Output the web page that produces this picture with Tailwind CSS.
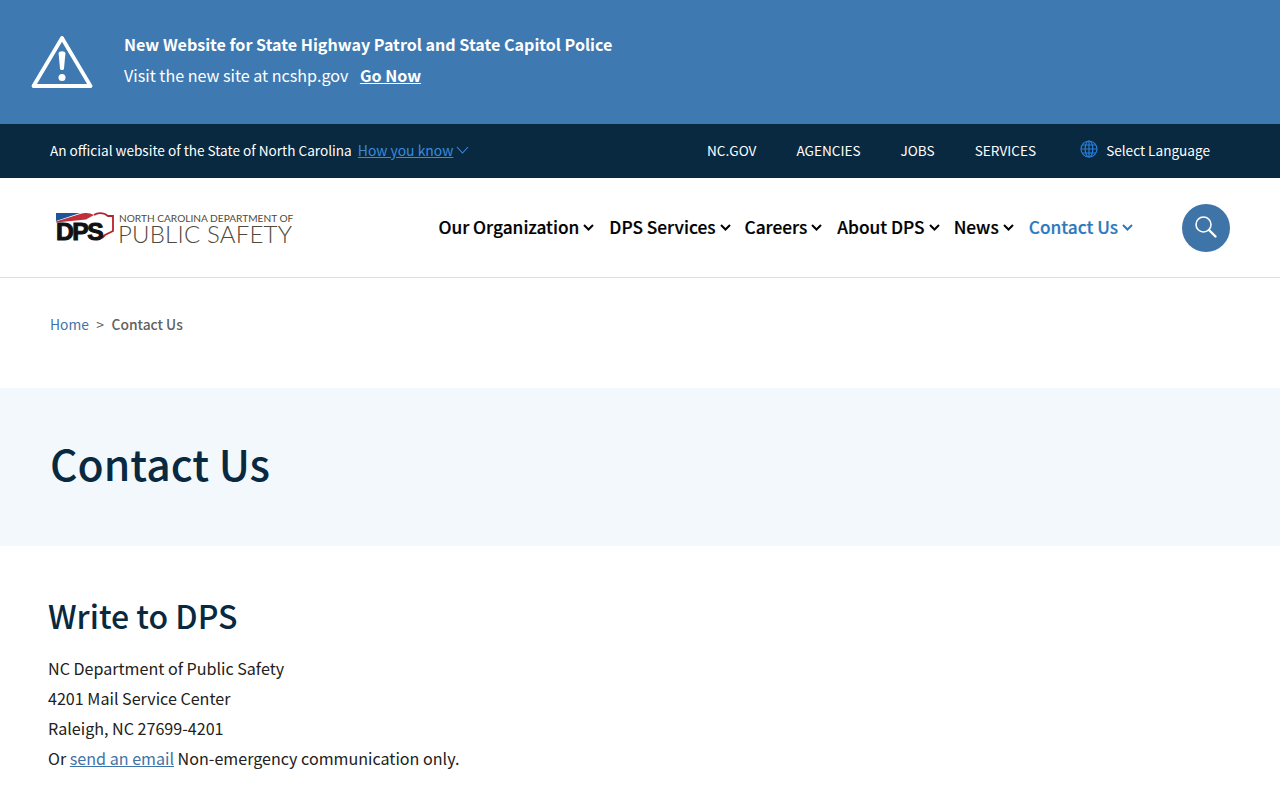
<!DOCTYPE html>
<html lang="en">

<head>
    <meta charset="UTF-8">
    <meta name="viewport" content="width=device-width, initial-scale=1.0">
    <title>Contact Us</title>
    <script src="https://cdn.jsdelivr.net/npm/@tailwindcss/browser@4"></script>
</head>

<body class="bg-white text-[#212121] font-['Noto_Sans_CJK_JP',sans-serif] overflow-hidden h-[800px]">
    <!-- alert banner -->
    <div class="bg-[#3e79b1] h-[124px] flex items-center pl-[31px] text-white">
        <svg class="w-[62px] h-[54px] mb-[1px]" viewBox="0 0 62 54" fill="none">
            <path d="M31 3 L59.5 51 L2.5 51 Z" stroke="white" stroke-width="3.8" stroke-linejoin="round" />
            <path d="M27.6 18.5 C27.6 15.5 34.4 15.5 34.4 18.5 L33 33.5 C32.8 35.6 29.2 35.6 29 33.5 Z" fill="white" />
            <circle cx="31" cy="42.5" r="3.5" fill="white" />
        </svg>
        <div class="ml-[31px] mb-[4px]">
            <p class="text-[16.1px] leading-[31px] font-bold">New Website for State Highway Patrol and State Capitol Police</p>
            <p class="text-[16.1px] leading-[31px]">Visit the new site at ncshp.gov <a href="#" class="ml-[8px] font-bold underline">Go Now</a></p>
        </div>
    </div>

    <!-- state bar -->
    <div class="bg-[#092940] h-[54px] flex items-center justify-between pl-[50px] pr-[70px] pb-[1px] text-white text-[13.6px]">
        <div class="flex items-center">
            <span>An official website of the State of North Carolina</span>
            <a href="#" class="ml-[6px] text-[13.9px] text-[#3b8bdb] underline">How you know </a>
            <svg class="w-[13px] h-[8px] ml-[3px]" viewBox="0 0 13 8" fill="none">
                <path d="M1 1 L6.5 7 L12 1" stroke="#3b8bdb" stroke-width="1.1" />
            </svg>
        </div>
        <div class="flex items-center">
            <a href="#" class="mr-[40px]">NC.GOV</a>
            <a href="#" class="mr-[40px]">AGENCIES</a>
            <a href="#" class="mr-[40px]">JOBS</a>
            <a href="#" class="mr-[44px]">SERVICES</a>
            <svg class="w-[18px] h-[18px] mr-[8px] mb-[3px]" viewBox="0 0 18 18" fill="none" stroke="#2a7dd6" stroke-width="1.2">
                <circle cx="9" cy="9" r="8" />
                <ellipse cx="9" cy="9" rx="3.8" ry="8" />
                <path d="M9 1 V17 M1 9 H17 M2.2 5 H15.8 M2.2 13 H15.8" />
            </svg>
            <span>Select Language</span>
        </div>
    </div>

    <!-- main nav -->
    <div class="h-[100px] border-b border-[#e0e0e0] flex items-center justify-between pl-[56px] pr-[50px]">
        <div class="flex items-center mt-[1px]">
            <div class="relative w-[59px] h-[32px]">
                <svg class="absolute left-0 top-0 w-[59px] h-[32px]" viewBox="0 0 59 32" fill="none">
                    <path d="M0 1 H24 L0 9 Z" fill="#1f5596" />
                    <path d="M0 9.5 L24 2 C30 0 34 1 38 3 L30 7.5 L0 10.5 Z" fill="#c0303a" />
                    <path d="M38 3 C42 0 46 1 49 2 L52 4 L57 4 L57 19 L49 23 L46 26" stroke="#b5222f" stroke-width="1.8" />
                </svg>
                <span class="absolute left-0 top-[9px] text-[24.7px] leading-[22px] font-bold tracking-[-1.5px] text-[#111] [-webkit-text-stroke:1px_#111] font-['Liberation_Sans',sans-serif]">DPS</span>
            </div>
            <div class="ml-[4px] text-[#4f4a3c] font-['Lato',sans-serif]">
                <div class="text-[10.15px] leading-[11px] whitespace-nowrap">NORTH CAROLINA DEPARTMENT OF</div>
                <div class="-ml-[1px] text-[24px] leading-[19px] whitespace-nowrap font-light tracking-[0.2px]">PUBLIC SAFETY</div>
            </div>
        </div>
        <div class="flex items-center">
            <nav class="flex items-center text-[17.3px] font-medium text-black [-webkit-text-stroke:0.2px] mr-[49px] mb-[1px]">
                <a href="#" class="flex items-center mr-[15px]">Our Organization
                    <svg class="w-[11px] h-[7px] ml-[4px]" viewBox="0 0 11 7" fill="none"><path d="M1 1 L5.5 5.5 L10 1" stroke="currentColor" stroke-width="2" /></svg>
                </a>
                <a href="#" class="flex items-center mr-[14px]">DPS Services
                    <svg class="w-[11px] h-[7px] ml-[4px]" viewBox="0 0 11 7" fill="none"><path d="M1 1 L5.5 5.5 L10 1" stroke="currentColor" stroke-width="2" /></svg>
                </a>
                <a href="#" class="flex items-center mr-[15px]">Careers
                    <svg class="w-[11px] h-[7px] ml-[4px]" viewBox="0 0 11 7" fill="none"><path d="M1 1 L5.5 5.5 L10 1" stroke="currentColor" stroke-width="2" /></svg>
                </a>
                <a href="#" class="flex items-center mr-[14px]">About DPS
                    <svg class="w-[11px] h-[7px] ml-[4px]" viewBox="0 0 11 7" fill="none"><path d="M1 1 L5.5 5.5 L10 1" stroke="currentColor" stroke-width="2" /></svg>
                </a>
                <a href="#" class="flex items-center mr-[15px]">News
                    <svg class="w-[11px] h-[7px] ml-[4px]" viewBox="0 0 11 7" fill="none"><path d="M1 1 L5.5 5.5 L10 1" stroke="currentColor" stroke-width="2" /></svg>
                </a>
                <a href="#" class="flex items-center text-[#2d79bd]">Contact Us
                    <svg class="w-[11px] h-[7px] ml-[4px]" viewBox="0 0 11 7" fill="none"><path d="M1 1 L5.5 5.5 L10 1" stroke="currentColor" stroke-width="2" /></svg>
                </a>
            </nav>
            <button class="w-[48px] h-[48px] rounded-full bg-[#3e74a8] flex items-center justify-center">
                <svg class="w-[24px] h-[24px]" viewBox="0 0 24 24" fill="none" stroke="white">
                    <circle cx="9.5" cy="8.5" r="7.5" stroke-width="1.6" />
                    <path d="M15 14 L21.5 20.5" stroke-width="2.4" stroke-linecap="round" />
                </svg>
            </button>
        </div>
    </div>

    <!-- breadcrumb -->
    <div class="h-[110px] pl-[50px] pt-[36px] text-[13.8px] leading-[20px] text-[#616161] flex items-start">
        <a href="#" class="text-[#3e74a8]">Home</a>
        <span class="mx-[7.5px]">&gt;</span>
        <span class="font-medium">Contact Us</span>
    </div>

    <!-- page title -->
    <div class="h-[158px] bg-[#f3f8fc] pl-[50px] pb-[8px] flex items-center">
        <h1 class="text-[42.6px] leading-[56px] font-medium text-[#092940]">Contact Us</h1>
    </div>

    <!-- content -->
    <div class="pl-[48px] pt-[48px]">
        <h2 class="text-[32px] leading-[42px] font-medium text-[#092940] mb-[17px]">Write to DPS</h2>
        <p class="text-[16.1px] leading-[30px]">NC Department of Public Safety</p>
        <p class="text-[16.1px] leading-[30px]">4201 Mail Service Center</p>
        <p class="text-[16.1px] leading-[30px]">Raleigh, NC 27699-4201</p>
        <p class="text-[16.1px] leading-[30px]">Or <a href="#" class="text-[#3e74a8] underline">send an email</a> Non-emergency communication only.</p>
    </div>

</body>

</html>
